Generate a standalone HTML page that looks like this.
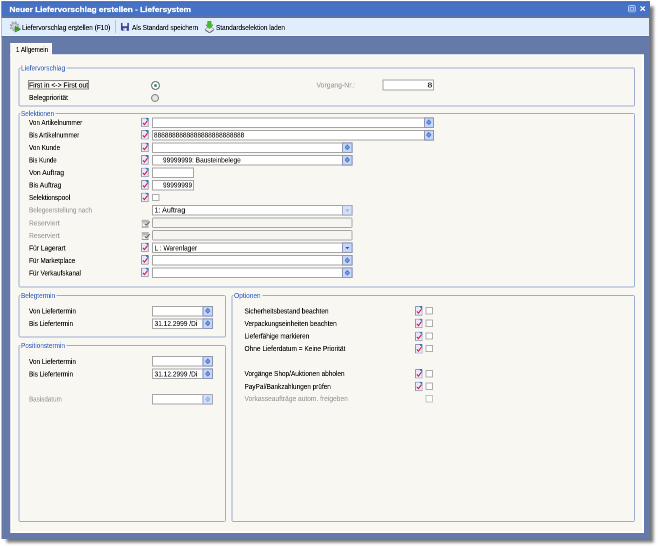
<!DOCTYPE html>
<html lang="de"><head><meta charset="utf-8"><title>Neuer Liefervorschlag erstellen - Liefersystem</title>
<style>
html,body{margin:0;padding:0;background:#fff}
body{position:relative;width:calc(1316px*0.5);height:calc(1096px*0.5);overflow:hidden;font-family:"Liberation Sans",sans-serif;font-size:14px;color:#000;-webkit-text-stroke:0.2px}
div,.t,svg.i{position:absolute;box-sizing:border-box}
.t{will-change:transform;white-space:nowrap;line-height:20px;transform-origin:0 50%}
.t u{text-decoration-thickness:1.2px;text-underline-offset:1.2px}
.v{color:#151515;-webkit-text-stroke:0.16px}.w{color:#fff;-webkit-text-stroke:0.44px}.g{color:#3a64c0;-webkit-text-stroke:0.1px}.d{color:#9c9c9c}
.win{background:#667aaa;box-shadow:8px 8px 6px rgba(0,0,0,.54)}
.title{background:#4572c4}
.tline{background:#5a74ab}
.tb{background:#dfedfc}
.panel{background:#f8f7f2;border:2.4px solid #fff;border-right-width:4px;border-bottom-width:4px}
.tab{background:#f8f7f2;border:2.4px solid #fff;border-bottom:0}
.gb{border:2px solid #9dabd0;border-radius:3px}
.gl{background:#f8f7f2}
.in{background:#fff;border:2px solid #a4a4a4}
.dis{background:#f6f5f1;border-color:#a6a6a6;border-radius:2px}
.btn{background:#c5d6f9;border:2px solid #8f96ae}
.btn.off{background:#d3e0f8;border-color:#a3aabd}
.cb{background:#fff;border:2px solid #adadad}
.cb.off{border-color:#c4c4c4}
.fr{border:2px solid #8a8a8a}
.sep{background:#b5c3da}
.r1{border:2.8px solid #4a587a;border-radius:50%;background:#fff}
.r1d{border-radius:50%;background:#3c9a3c}
.r2{border:2.1px solid #7a7a7a;border-radius:50%;background:#e6e6e4}
#root{left:0;top:0;width:1316px;height:1096px;transform:scale(0.5);transform-origin:0 0}

</style></head>
<body>
<svg width="0" height="0" style="position:absolute">
<defs>
<symbol id="doc" viewBox="0 0 8 10">
<path d="M.5 .5H4.8L7.5 3.2V9.5H.5Z" fill="#e8eafc" stroke="#8d92a8" stroke-width="1"/>
<path d="M4.2 0L8 3.8V.9Q8 0 7.1 0Z" fill="#3c70c5"/>
<path d="M1.9 5.6L3.5 7.3L6.7 3.2" fill="none" stroke="#cf2045" stroke-width="1.15"/>
</symbol>
<symbol id="docd" viewBox="0 0 9 8.4">
<rect x=".5" y=".5" width="5.9" height="7.4" fill="#fff" stroke="#a2a2a2" stroke-width="1"/>
<rect x="0" y="0" width="6.9" height="3.2" fill="#b6b6b6"/>
<rect x="1" y="3.2" width="4.9" height="1.6" fill="#cfcfcf"/>
<rect x="0" y="6.9" width="6.9" height="1.5" fill="#9a9a9a"/>
<path d="M3.4 4.6L4.7 5.8L8.2 2.2" fill="none" stroke="#5e5e5e" stroke-width="1.1"/>
</symbol>
<symbol id="spin" viewBox="0 0 6 7">
<path d="M3 .3L5.7 3.1V3.9L3 6.7L.3 3.9V3.1Z" fill="#4f7bcb"/>
<ellipse cx="3" cy="3.5" rx="1.5" ry="1" fill="#7fa1e2"/>
</symbol>
<symbol id="dd" viewBox="0 0 6 4">
<path d="M.3 .6H5.7L3 3.6Z" fill="currentColor"/>
</symbol>
<symbol id="gear" viewBox="0 0 12 12">
<circle cx="5" cy="5.3" r="4.1" fill="none" stroke="#a3a9af" stroke-width="1.8" stroke-dasharray="1.7 1.52"/>
<circle cx="5" cy="5.3" r="3.2" fill="#d3d7db" stroke="#8f959c" stroke-width=".8"/>
<circle cx="5" cy="5.3" r="1.2" fill="#eef2f7" stroke="#9aa0a6" stroke-width=".5"/>
<path d="M5.7 5.5L11 8.3L5.7 10.9Z" fill="#3c982b" stroke="#2f7d22" stroke-width=".8" stroke-linejoin="round"/>
<path d="M6.3 8.9L7.8 9.6L6.3 10.3Z" fill="#6fc850"/>
</symbol>
<symbol id="save" viewBox="0 0 9 9">
<path d="M.3 .3H8.7V8.7H1.3L.3 7.7Z" fill="#37449a"/>
<rect x="2" y=".3" width="5" height="3.6" fill="#e9eef6"/>
<rect x="2.5" y="5.7" width="4" height="3" fill="#9fabd6"/>
<rect x="4.3" y="6.1" width="1.7" height="2.6" fill="#f2f4fa"/>
</symbol>
<symbol id="load" viewBox="0 0 10 12">
<path d="M.3 8.3L5 5.2L9.7 8.3L5 11.6Z" fill="#e4e6e8" stroke="#8d9094" stroke-width=".8"/>
<path d="M.6 9L5 11.9L9.4 9" fill="none" stroke="#5a5d62" stroke-width=".9"/>
<path d="M3.2 .3H6.6V3.9H8.6L4.9 7.6L1.4 3.9H3.2Z" fill="#3fc024" stroke="#2f9a1e" stroke-width=".6"/>
</symbol>
</defs>
</svg>

<div id="root">
<div class="win" style="left:3px;top:2.6px;width:1297.2px;height:1075.4px;"></div>
<div class="title" style="left:3px;top:2.6px;width:1297.2px;height:29.8px;"></div>
<div class="" style="left:3px;top:2.6px;width:1297.2px;height:2px;background:#3f66b6"></div>
<div class="tline" style="left:3px;top:32px;width:1297.2px;height:3.6px;"></div>
<div class="tb" style="left:3.6px;top:35.6px;width:1294.6px;height:36px;"></div>
<div class="" style="left:3.6px;top:69.6px;width:1294.6px;height:2px;background:#eef6fe"></div>
<div class="" style="left:3px;top:71.6px;width:1297.2px;height:2.4px;background:#5d719f"></div>
<svg class="i" style="left:1256.2px;top:10px" width="15.6" height="15.2" viewBox="0 0 7.8 7.6"><rect x=".5" y=".5" width="6.8" height="6.6" rx=".9" fill="#5b84d2" stroke="#b4c9f2" stroke-width="1"/><rect x="2.3" y="2.4" width="3.2" height="2.8" fill="#4a76cb" stroke="#b4c9f2" stroke-width=".9"/></svg>
<svg class="i" style="left:1280px;top:12.4px" width="10.8" height="10.4" viewBox="0 0 5.4 5.2"><path d="M.5 .4L4.9 4.8M4.9 .4L.5 4.8" stroke="#fff" stroke-width="1.25" fill="none"/></svg>
<svg class="i" style="left:19.4px;top:42px;" width="24" height="24"><use href="#gear"/></svg>
<div class="sep" style="left:230.4px;top:40px;width:2px;height:26px;"></div>
<svg class="i" style="left:241.2px;top:45.2px;" width="17.6" height="17.2"><use href="#save"/></svg>
<svg class="i" style="left:408.8px;top:41.6px;" width="20" height="24"><use href="#load"/></svg>
<div class="panel" style="left:21.2px;top:109.4px;width:1267.2px;height:957px;"></div>
<div class="tab" style="left:21.2px;top:86px;width:82.6px;height:26.8px;"></div>
<div class="gb" style="left:37.2px;top:135.4px;width:1232.8px;height:78px;"></div>
<div class="gl" style="left:40.8px;top:129.4px;width:92.2px;height:14px;"></div>
<div class="gb" style="left:37.2px;top:226px;width:1232.8px;height:348.6px;"></div>
<div class="gl" style="left:41px;top:220px;width:70px;height:14px;"></div>
<div class="gb" style="left:37.2px;top:590.4px;width:415.2px;height:84.6px;"></div>
<div class="gl" style="left:41px;top:584.4px;width:72px;height:14px;"></div>
<div class="gb" style="left:37.2px;top:690px;width:415.2px;height:353.6px;"></div>
<div class="gl" style="left:41px;top:684px;width:91.8px;height:14px;"></div>
<div class="gb" style="left:463.2px;top:590.4px;width:806.8px;height:453.2px;"></div>
<div class="gl" style="left:467.2px;top:584.4px;width:57.4px;height:14px;"></div>
<div class="fr" style="left:56.4px;top:160.4px;width:121.6px;height:18.4px;"></div>
<div class="r1" style="left:301.6px;top:161.8px;width:18.4px;height:18.4px;"></div>
<div class="r1d" style="left:307.6px;top:167.8px;width:6.4px;height:6.4px;"></div>
<div class="r2" style="left:302px;top:187.6px;width:16.4px;height:16.4px;"></div>
<div class="in" style="left:764.6px;top:159.4px;width:103.2px;height:21.2px;"></div>
<svg class="i" style="left:282.4px;top:234.8px;" width="15.6" height="19.6"><use href="#doc"/></svg>
<div class="in" style="left:303.8px;top:234.7px;width:564.2px;height:21.2px;"></div>
<div class="btn" style="left:847.6px;top:234.7px;width:20.4px;height:21.2px;"></div>
<svg class="i" style="left:852.4px;top:238.3px;" width="11.2" height="13.2"><use href="#spin"/></svg>
<svg class="i" style="left:282.4px;top:259.84px;" width="15.6" height="19.6"><use href="#doc"/></svg>
<div class="in" style="left:303.8px;top:259.74px;width:564.2px;height:21.2px;"></div>
<div class="btn" style="left:847.6px;top:259.74px;width:20.4px;height:21.2px;"></div>
<svg class="i" style="left:852.4px;top:263.34px;" width="11.2" height="13.2"><use href="#spin"/></svg>
<svg class="i" style="left:282.4px;top:284.88px;" width="15.6" height="19.6"><use href="#doc"/></svg>
<div class="in" style="left:303.8px;top:284.78px;width:401px;height:21.2px;"></div>
<div class="btn" style="left:684.4px;top:284.78px;width:20.4px;height:21.2px;"></div>
<svg class="i" style="left:689.2px;top:288.38px;" width="11.2" height="13.2"><use href="#spin"/></svg>
<svg class="i" style="left:282.4px;top:309.92px;" width="15.6" height="19.6"><use href="#doc"/></svg>
<div class="in" style="left:303.8px;top:309.82px;width:401px;height:21.2px;"></div>
<div class="btn" style="left:684.4px;top:309.82px;width:20.4px;height:21.2px;"></div>
<svg class="i" style="left:689.2px;top:313.42px;" width="11.2" height="13.2"><use href="#spin"/></svg>
<svg class="i" style="left:282.4px;top:334.96px;" width="15.6" height="19.6"><use href="#doc"/></svg>
<div class="in" style="left:303.8px;top:334.86px;width:84px;height:21.2px;"></div>
<svg class="i" style="left:282.4px;top:360px;" width="15.6" height="19.6"><use href="#doc"/></svg>
<div class="in" style="left:303.8px;top:359.9px;width:84px;height:21.2px;"></div>
<svg class="i" style="left:282.4px;top:385.04px;" width="15.6" height="19.6"><use href="#doc"/></svg>
<div class="cb" style="left:304px;top:388.04px;width:14.8px;height:14.4px;"></div>
<div class="in" style="left:303.8px;top:409.98px;width:401px;height:21.2px;"></div>
<div class="btn off" style="left:684.4px;top:409.98px;width:20.4px;height:21.2px;"></div>
<svg class="i" style="left:690px;top:418.18px;color:#93aadb" width="9.6" height="6"><use href="#dd"/></svg>
<svg class="i" style="left:283.2px;top:438.52px;" width="18" height="16.8"><use href="#docd"/></svg>
<div class="in dis" style="left:303.8px;top:435.02px;width:401px;height:21.2px;"></div>
<svg class="i" style="left:283.2px;top:463.56px;" width="18" height="16.8"><use href="#docd"/></svg>
<div class="in dis" style="left:303.8px;top:460.06px;width:401px;height:21.2px;"></div>
<svg class="i" style="left:282.4px;top:485.2px;" width="15.6" height="19.6"><use href="#doc"/></svg>
<div class="in" style="left:303.8px;top:485.1px;width:401px;height:21.2px;"></div>
<div class="btn" style="left:684.4px;top:485.1px;width:20.4px;height:21.2px;"></div>
<svg class="i" style="left:690px;top:493.3px;color:#2b4ca6" width="9.6" height="6"><use href="#dd"/></svg>
<svg class="i" style="left:282.4px;top:510.24px;" width="15.6" height="19.6"><use href="#doc"/></svg>
<div class="in" style="left:303.8px;top:510.14px;width:401px;height:21.2px;"></div>
<div class="btn" style="left:684.4px;top:510.14px;width:20.4px;height:21.2px;"></div>
<svg class="i" style="left:689.2px;top:513.74px;" width="11.2" height="13.2"><use href="#spin"/></svg>
<svg class="i" style="left:282.4px;top:535.28px;" width="15.6" height="19.6"><use href="#doc"/></svg>
<div class="in" style="left:303.8px;top:535.18px;width:401px;height:21.2px;"></div>
<div class="btn" style="left:684.4px;top:535.18px;width:20.4px;height:21.2px;"></div>
<svg class="i" style="left:689.2px;top:538.78px;" width="11.2" height="13.2"><use href="#spin"/></svg>
<div class="in" style="left:303.8px;top:611.7px;width:121.8px;height:21.2px;"></div>
<div class="btn" style="left:405.2px;top:611.7px;width:20.4px;height:21.2px;"></div>
<svg class="i" style="left:410px;top:615.3px;" width="11.2" height="13.2"><use href="#spin"/></svg>
<div class="in" style="left:303.8px;top:636.7px;width:121.8px;height:21.2px;"></div>
<div class="btn" style="left:405.2px;top:636.7px;width:20.4px;height:21.2px;"></div>
<svg class="i" style="left:410px;top:640.3px;" width="11.2" height="13.2"><use href="#spin"/></svg>
<div class="in" style="left:303.8px;top:711.9px;width:121.8px;height:21.2px;"></div>
<div class="btn" style="left:405.2px;top:711.9px;width:20.4px;height:21.2px;"></div>
<svg class="i" style="left:410px;top:715.5px;" width="11.2" height="13.2"><use href="#spin"/></svg>
<div class="in" style="left:303.8px;top:737.1px;width:121.8px;height:21.2px;"></div>
<div class="btn" style="left:405.2px;top:737.1px;width:20.4px;height:21.2px;"></div>
<svg class="i" style="left:410px;top:740.7px;" width="11.2" height="13.2"><use href="#spin"/></svg>
<div class="in" style="left:303.8px;top:787.9px;width:121.8px;height:21.2px;"></div>
<div class="btn off" style="left:405.2px;top:787.9px;width:20.4px;height:21.2px;"></div>
<svg class="i" style="left:410px;top:791.5px;opacity:.45" width="11.2" height="13.2"><use href="#spin"/></svg>
<svg class="i" style="left:829.6px;top:612.4px;" width="15.6" height="19.6"><use href="#doc"/></svg>
<div class="cb" style="left:850.6px;top:614.4px;width:15.6px;height:14.8px;"></div>
<svg class="i" style="left:829.6px;top:637.4px;" width="15.6" height="19.6"><use href="#doc"/></svg>
<div class="cb" style="left:850.6px;top:639.4px;width:15.6px;height:14.8px;"></div>
<svg class="i" style="left:829.6px;top:662.6px;" width="15.6" height="19.6"><use href="#doc"/></svg>
<div class="cb" style="left:850.6px;top:664.6px;width:15.6px;height:14.8px;"></div>
<svg class="i" style="left:829.6px;top:687.6px;" width="15.6" height="19.6"><use href="#doc"/></svg>
<div class="cb" style="left:850.6px;top:689.6px;width:15.6px;height:14.8px;"></div>
<svg class="i" style="left:829.6px;top:737.8px;" width="15.6" height="19.6"><use href="#doc"/></svg>
<div class="cb" style="left:850.6px;top:739.8px;width:15.6px;height:14.8px;"></div>
<svg class="i" style="left:829.6px;top:763px;" width="15.6" height="19.6"><use href="#doc"/></svg>
<div class="cb" style="left:850.6px;top:765px;width:15.6px;height:14.8px;"></div>
<div class="cb off" style="left:850.6px;top:789.8px;width:15.6px;height:14.8px;"></div>
<span class="t w" style="left:19.2px;top:9px;transform:scaleX(1.0995);font-size:15px;font-weight:bold;">Neuer Liefervorschlag erstellen - Liefersystem</span>
<span class="t " style="left:43.8px;top:45px;transform:scaleX(0.9329);">Liefervorschlag er<u>s</u>tellen (F10)</span>
<span class="t " style="left:264.4px;top:45px;transform:scaleX(0.9132);">Als Standard speichern</span>
<span class="t " style="left:432px;top:45px;transform:scaleX(0.9172);">Standardselektion laden</span>
<span class="t " style="left:32px;top:89px;transform:scaleX(0.8869);">1 Allgemein</span>
<span class="t g" style="left:42px;top:126px;transform:scaleX(0.9290);">Liefervorschlag</span>
<span class="t g" style="left:42.2px;top:217px;transform:scaleX(0.9020);">Selektionen</span>
<span class="t g" style="left:42.2px;top:581px;transform:scaleX(0.9103);">Belegtermin</span>
<span class="t g" style="left:42.2px;top:681px;transform:scaleX(0.9174);">Positionstermin</span>
<span class="t g" style="left:468.4px;top:581px;transform:scaleX(0.9397);">Optionen</span>
<span class="t " style="left:58px;top:160px;transform:scaleX(0.9740);">First in &lt;-&gt; First out</span>
<span class="t " style="left:58px;top:185px;transform:scaleX(0.9455);">Belegpriorität</span>
<span class="t d" style="left:633.2px;top:160px;transform:scaleX(0.9770);">Vorgang-Nr.:</span>
<span class="t v" style="left:854.6px;top:160px;transform:scaleX(1.2056);">8</span>
<span class="t " style="left:58px;top:235px;transform:scaleX(0.9072);">Von Artikelnummer</span>
<span class="t " style="left:58px;top:260px;transform:scaleX(0.8900);">Bis Artikelnummer</span>
<span class="t " style="left:58px;top:285px;transform:scaleX(0.9078);">Von Kunde</span>
<span class="t " style="left:58px;top:310px;transform:scaleX(0.8680);">Bis Kunde</span>
<span class="t " style="left:58px;top:335px;transform:scaleX(0.9695);">Von Auftrag</span>
<span class="t " style="left:58px;top:360px;transform:scaleX(0.9542);">Bis Auftrag</span>
<span class="t " style="left:58px;top:385px;transform:scaleX(0.9027);">Selektionspool</span>
<span class="t d" style="left:58px;top:410px;transform:scaleX(0.9094);">Belegeerstellung nach</span>
<span class="t d" style="left:58px;top:436px;transform:scaleX(0.9593);">Reserviert</span>
<span class="t d" style="left:58px;top:461px;transform:scaleX(0.9593);">Reserviert</span>
<span class="t " style="left:58px;top:486px;transform:scaleX(0.9475);">Für Lagerart</span>
<span class="t " style="left:58px;top:511px;transform:scaleX(0.9134);">Für Marketplace</span>
<span class="t " style="left:58px;top:536px;transform:scaleX(0.9199);">Für Verkaufskanal</span>
<span class="t v" style="left:307.6px;top:260px;transform:scaleX(0.9278);">8888888888888888888888888</span>
<span class="t v" style="left:325.6px;top:310px;transform:scaleX(0.9340);">99999999: Bausteinbelege</span>
<span class="t v" style="left:325.6px;top:360px;transform:scaleX(0.9342);">99999999</span>
<span class="t v" style="left:308.8px;top:410px;transform:scaleX(1.0244);">1: Auftrag</span>
<span class="t v" style="left:308.8px;top:486px;transform:scaleX(0.9407);">L : Warenlager</span>
<span class="t " style="left:58px;top:612px;transform:scaleX(0.9200);">Von Liefertermin</span>
<span class="t " style="left:58px;top:637px;transform:scaleX(0.9047);">Bis Liefertermin</span>
<span class="t v" style="left:308.8px;top:637px;transform:scaleX(0.9399);">31.12.2999 /Di</span>
<span class="t " style="left:58px;top:713px;transform:scaleX(0.9200);">Von Liefertermin</span>
<span class="t " style="left:58px;top:738px;transform:scaleX(0.9047);">Bis Liefertermin</span>
<span class="t v" style="left:308.8px;top:738px;transform:scaleX(0.9399);">31.12.2999 /Di</span>
<span class="t d" style="left:58px;top:788px;transform:scaleX(0.8967);">Basisdatum</span>
<span class="t " style="left:489.4px;top:612px;transform:scaleX(0.9315);">Sicherheitsbestand beachten</span>
<span class="t " style="left:489.4px;top:637px;transform:scaleX(0.9253);">Verpackungseinheiten beachten</span>
<span class="t " style="left:489.4px;top:662px;transform:scaleX(0.9304);">Lieferfähige markieren</span>
<span class="t " style="left:489.4px;top:687px;transform:scaleX(0.9344);">Ohne Lieferdatum = Keine Priorität</span>
<span class="t " style="left:489.4px;top:737px;transform:scaleX(0.9251);">Vorgänge Shop/Auktionen abholen</span>
<span class="t " style="left:489.4px;top:763px;transform:scaleX(0.9163);">PayPal/Bankzahlungen prüfen</span>
<span class="t d" style="left:489.4px;top:787px;transform:scaleX(0.9480);">Vorkasseaufträge autom. freigeben</span>
</div>
</body></html>
